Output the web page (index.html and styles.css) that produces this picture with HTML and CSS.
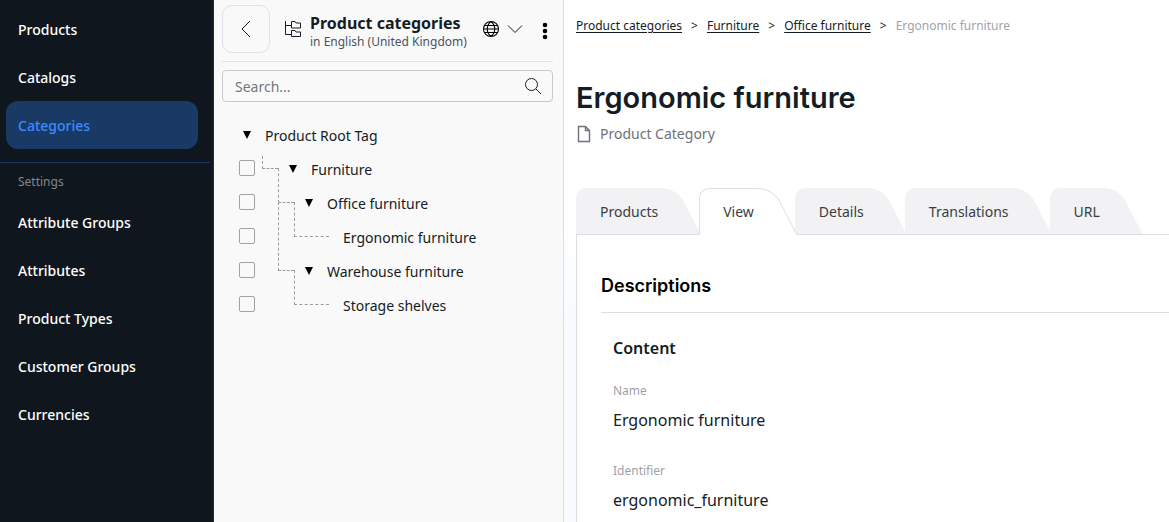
FILE: index.html
```html
<!DOCTYPE html>
<html lang="en">
<head>
<meta charset="utf-8">
<title>Product categories</title>
<link rel="stylesheet" href="styles.css">
</head>
<body>
<div class="app">
  <nav class="sidebar" aria-label="Main">
    <div class="nav-group">
      <a class="nav-link" href="#">Products</a>
      <a class="nav-link" href="#">Catalogs</a>
      <a class="nav-link active" href="#" aria-current="page">Categories</a>
    </div>
    <div class="nav-rule"></div>
    <h2 class="nav-title">Settings</h2>
    <div class="nav-group">
      <a class="nav-link" href="#">Attribute Groups</a>
      <a class="nav-link" href="#">Attributes</a>
      <a class="nav-link" href="#">Product Types</a>
      <a class="nav-link" href="#">Customer Groups</a>
      <a class="nav-link" href="#">Currencies</a>
    </div>
  </nav>

  <section class="panel" aria-label="Product categories">
    <header class="panel-head">
      <button class="back" type="button" aria-label="Back">
        <svg width="24" height="24" viewBox="0 0 24 24"><path d="M16 4 8 12l8 8"/></svg>
      </button>
      <svg class="tree-icon" width="18" height="18" viewBox="0 0 18 18" aria-hidden="true"><path d="M1.500 1v13.500h6M1.500 5.500h6M7.500 1.500h3.500l1 1.500h4.500v5h-9zM7.500 10.500h3.500l1 1.500h4.500v4.500h-9z"/></svg>
      <div class="panel-names">
        <h2 class="panel-title">Product categories</h2>
        <p class="panel-lang">in English (United Kingdom)</p>
      </div>
      <button class="lang-button" type="button" aria-label="Language">
        <svg class="globe" width="18" height="18" viewBox="0 0 18 18"><path d="M9 1.500a7.500 7.500 0 1 0 0 15a7.500 7.500 0 1 0 0-15zM9 1.500c-5 4-5 11 0 15M9 1.500c5 4 5 11 0 15M1.500 9h15M2.500 5.500h13M2.500 12.500h13"/></svg>
        <svg width="16" height="18" viewBox="0 0 16 18"><path d="M1 5.500l7 7 7-7"/></svg>
      </button>
      <button class="more" type="button" aria-label="More">
        <svg width="6" height="18" viewBox="0 0 6 18"><circle cx="3" cy="3" r="2.300"/><circle cx="3" cy="9" r="2.300"/><circle cx="3" cy="15" r="2.300"/></svg>
      </button>
    </header>
    <form class="search">
      <input class="search-input" type="text" placeholder="Search..." aria-label="Search">
      <button class="search-button" type="button" aria-label="Search">
        <svg width="18" height="18" viewBox="0 0 18 18"><circle cx="7.500" cy="7.500" r="6"/><path d="M12 12l5 5"/></svg>
      </button>
    </form>
    <ul class="tree">
      <li class="row root"><button class="toggle" type="button" aria-label="Collapse Product Root Tag"></button><span class="label">Product Root Tag</span></li>
      <li class="row level-1"><input class="check" type="checkbox" id="c1"><span class="elbow short"></span><button class="toggle" type="button" aria-label="Collapse Furniture"></button><label class="label" for="c1">Furniture</label></li>
      <li class="row level-2"><input class="check" type="checkbox" id="c2"><span class="elbow"></span><button class="toggle" type="button" aria-label="Collapse Office furniture"></button><label class="label" for="c2">Office furniture</label></li>
      <li class="row level-3"><input class="check" type="checkbox" id="c3"><span class="elbow"></span><label class="label" for="c3">Ergonomic furniture</label></li>
      <li class="row level-2"><input class="check" type="checkbox" id="c4"><span class="elbow tall"></span><button class="toggle" type="button" aria-label="Collapse Warehouse furniture"></button><label class="label" for="c4">Warehouse furniture</label></li>
      <li class="row level-3"><input class="check" type="checkbox" id="c5"><span class="elbow"></span><label class="label" for="c5">Storage shelves</label></li>
    </ul>
  </section>

  <main class="main">
    <nav class="crumbs" aria-label="Breadcrumb">
      <a href="#">Product categories</a><span>&gt;</span><a href="#">Furniture</a><span>&gt;</span><a href="#">Office furniture</a><span>&gt;</span><span class="current">Ergonomic furniture</span>
    </nav>
    <h1 class="title">Ergonomic furniture</h1>
    <p class="kind">
      <svg class="page-icon" width="16" height="18" viewBox="0 0 16 18" aria-hidden="true"><path d="M2.500 1.500h7l4 4v11h-11zM9.500 1.500v4h4"/></svg>
      Product Category
    </p>
    <div class="tabs" role="tablist">
      <button class="tab" type="button" role="tab"><span class="tab-text">Products</span><svg class="tab-end" width="40" height="47" viewBox="0 0 40 47"><path d="M0 0C10 0 18 5 23 14L40 47H0"/></svg></button>
      <button class="tab selected" type="button" role="tab" aria-selected="true"><span class="tab-text">View</span><svg class="tab-end" width="40" height="47" viewBox="0 0 40 47"><path class="fill" d="M0 .5C10 .5 18 5 23 14L40 47H0"/><path class="edge" d="M0 .5C10 .5 18 5 23 14L40 47"/></svg></button>
      <button class="tab" type="button" role="tab"><span class="tab-text">Details</span><svg class="tab-end" width="40" height="47" viewBox="0 0 40 47"><path d="M0 0C10 0 18 5 23 14L40 47H0"/></svg></button>
      <button class="tab" type="button" role="tab"><span class="tab-text">Translations</span><svg class="tab-end" width="40" height="47" viewBox="0 0 40 47"><path d="M0 0C10 0 18 5 23 14L40 47H0"/></svg></button>
      <button class="tab" type="button" role="tab"><span class="tab-text">URL</span><svg class="tab-end" width="40" height="47" viewBox="0 0 40 47"><path d="M0 0C10 0 18 5 23 14L40 47H0"/></svg></button>
    </div>
    <section class="sheet">
      <h2 class="section-title">Descriptions</h2>
      <div class="fields">
        <h3 class="fields-title">Content</h3>
        <dl>
          <dt>Name</dt><dd>Ergonomic furniture</dd>
          <dt>Identifier</dt><dd>ergonomic_furniture</dd>
        </dl>
      </div>
    </section>
  </main>
</div>
</body>
</html>
```
FILE: styles.css
```css
* { box-sizing: border-box; }
html, body { height: 100%; }
body { margin: 0; font: 14px/20px "Noto Sans", sans-serif; color: #141c24; overflow: hidden; }
h1, h2, h3, p, ul, dl, dd { margin: 0; padding: 0; }
button { padding: 0; border: 0; background: none; font: inherit; color: inherit; cursor: pointer; }
svg { display: block; flex: none; fill: none; stroke: currentColor; }

.app { display: flex; height: 100%; }

.sidebar { flex: none; width: 214px; padding-top: 5px; background: #0f161d; border-right: 1px solid #1b3050; color: #fff; }
.nav-group { padding: 0 15px 0 6px; }
.nav-link { display: flex; align-items: center; height: 48px; padding: 1px 12px 0; border-radius: 12px; color: #fff; font-weight: 500; text-decoration: none; }
.nav-link.active { background: #1a3a66; color: #3d8bff; }
.nav-rule { height: 1px; margin: 13px 3px 0 0; background: #1a3a66; }
.nav-title { padding: 9px 18px 6px; font-size: 12px; line-height: 20px; font-weight: 400; color: #85878b; }

.panel { flex: none; width: 350px; padding: 5px 10px 0 8px; background: #f9f9f9; border-right: 1px solid #dddfe6; }
.panel-head { display: flex; align-items: center; height: 57px; padding-bottom: 8px; border-bottom: 1px solid #e2e3e8; }
.back { display: grid; place-items: center; width: 48px; height: 48px; border: 1px solid #e0e0ea; border-radius: 10px; }
.tree-icon { margin-left: 14px; }
.panel-names { flex: 1; margin: 5px 0 0 8px; }
.panel-title { font-size: 16px; line-height: 20px; font-weight: 700; white-space: nowrap; }
.panel-lang { font-size: 12px; line-height: 18px; color: #4b5360; white-space: nowrap; }
.lang-button { display: flex; gap: 7px; }
.globe { color: #000; stroke-width: 1.1; }
.more { margin: 4px 5px 0 19px; }
.more svg { fill: #000; stroke: none; }
.search { display: flex; align-items: center; height: 32px; margin-top: 8px; border: 1px solid #c8c9cc; border-radius: 4px; }
.search-input { flex: 1; min-width: 0; height: 30px; padding: 0 12px; border: 0; outline: 0; background: none; font: inherit; }
.search-input::placeholder { color: #74777d; opacity: 1; }
.search-button { margin-right: 10px; }

.tree { padding: 17px 0 0 17px; list-style: none; }
.row { display: flex; align-items: flex-start; height: 34px; }
.check { appearance: none; flex: none; width: 16px; height: 16px; margin: 7px 0 0; border: 1px solid #a0a1a5; border-radius: 2px; background: #f9f9f9; }
.elbow { flex: none; width: 16px; height: 35px; margin-top: -19px; border: 1px dashed #9b9ca0; border-width: 0 0 1px 1px; }
.elbow.short { height: 13px; margin-top: 3px; }
.elbow.tall { height: 69px; margin-top: -53px; }
.level-1 .elbow { margin-left: 7px; }
.level-2 .elbow { margin-left: 23px; }
.level-3 .elbow { width: 35px; margin-left: 39px; }
.toggle { flex: none; width: 8px; height: 8px; margin: 12px 14px 0 11px; background: #000; clip-path: polygon(0 0, 100% 0, 50% 100%); }
.root .toggle { margin-left: 4px; }
.label { padding-top: 7px; white-space: nowrap; }
.level-3 .label { margin-left: 14px; }

.main { flex: 1; min-width: 0; display: flex; flex-direction: column; padding: 16px 0 0 12px; background: #fff; overflow: hidden; }
.crumbs { display: flex; gap: 9px; font-size: 12px; line-height: 20px; white-space: nowrap; }
.crumbs a { color: #141c24; text-underline-offset: 2px; }
.crumbs .current { color: #9fa3aa; }
.title { margin-top: 42px; font: 600 29px/40px Inter, sans-serif; }
.kind { display: flex; align-items: center; gap: 8px; margin-top: 6px; color: #6e7278; }
.page-icon { stroke-width: 1.4; }

.tabs { position: relative; z-index: 1; display: flex; height: 47px; margin-top: 44px; }
.tab { display: flex; height: 46px; overflow-y: clip; line-height: 20px; color: #3a3d42; }
.tab-text { height: 47px; padding: 14px 3px 0 24px; background: #f2f2f4; border-radius: 10px 0 0 0; white-space: nowrap; }
.tab-end { margin-right: -2px; fill: #f2f2f4; stroke: none; }
.tab.selected { position: relative; height: 47px; }
.selected .tab-text { padding: 13px 3px 0 23px; background: #fff; border: 1px solid #dddde6; border-width: 1px 0 0 1px; }
.selected .fill { fill: #fff; }
.selected .edge { fill: none; stroke: #dddde6; }

.sheet { flex: 1; margin-top: -1px; padding: 36px 0 24px 24px; background: #fff; border: 1px solid #dddde6; border-width: 1px 0 0 1px; box-shadow: 0 40px 60px rgba(60, 140, 255, 0.08); }
.section-title { padding-bottom: 11px; border-bottom: 1px solid #dddde6; font: 600 18px/30px Inter, sans-serif; color: #000; }
.fields { padding: 23px 12px 0; }
.fields-title { font-size: 16px; line-height: 24px; font-weight: 600; }
dl { padding-top: 21px; }
dt { font-size: 12px; line-height: 20px; color: #9fa1a6; }
dd { margin-bottom: 29px; padding-top: 7px; font-size: 16px; line-height: 24px; }
```
